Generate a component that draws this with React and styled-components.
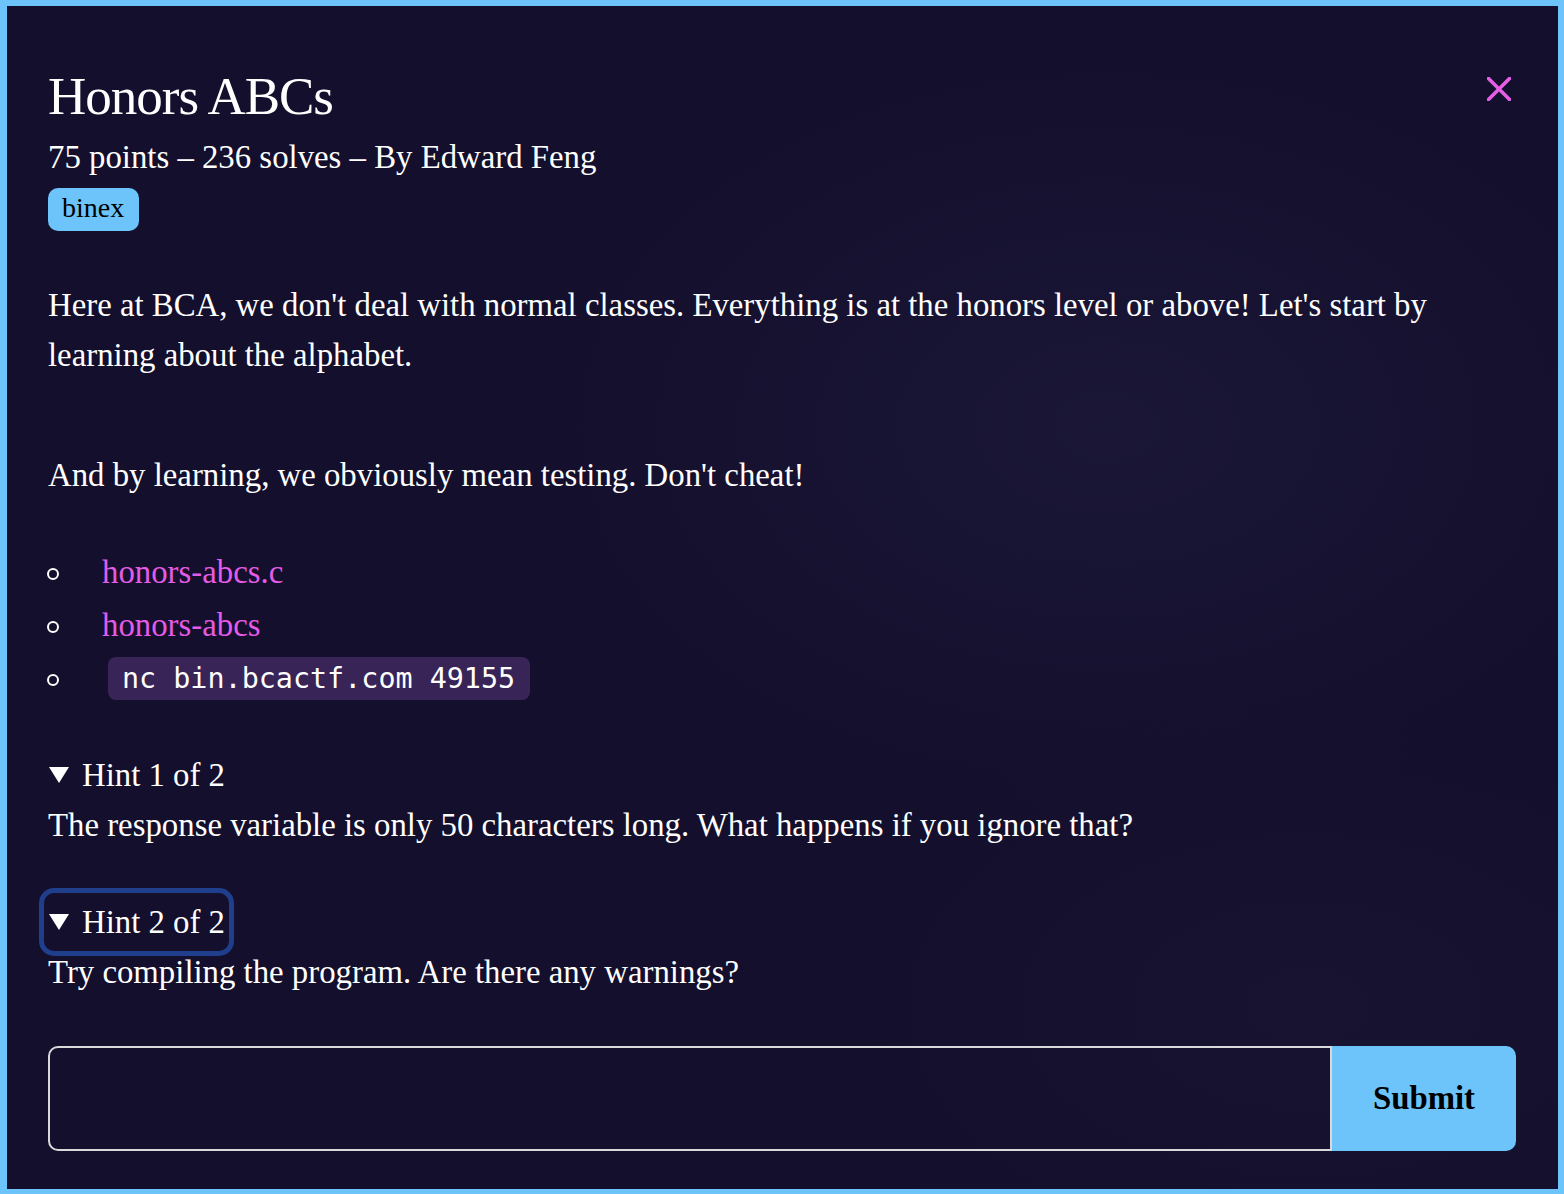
import styled, { createGlobalStyle } from "styled-components";

const GlobalStyle = createGlobalStyle`
  html, body {
    margin: 0;
    padding: 0;
    background: #130f2c;
  }
  * {
    box-sizing: border-box;
  }
`;

const Modal = styled.div`
  height: 100vh;
  overflow: hidden;
  border-style: solid;
  border-color: #6cc4fa;
  border-width: 6px 6px 5px 7px;
  padding: 60px 42px 0 41px;
  background:
    radial-gradient(ellipse 600px 400px at 1100px 420px, rgba(40, 34, 72, 0.35), transparent),
    radial-gradient(ellipse 500px 300px at 1300px 1000px, rgba(34, 28, 60, 0.3), transparent),
    #130f2c;
  color: #ffffff;
  font-family: "Liberation Serif", "Times New Roman", serif;
  font-size: 32.8px;
`;

const Header = styled.div`
  display: flex;
  justify-content: space-between;
  align-items: flex-start;
`;

const HeaderText = styled.div`
  display: flex;
  flex-direction: column;
  align-items: flex-start;
`;

const Title = styled.h1`
  margin: 0;
  font-size: 53px;
  font-weight: 400;
  line-height: 60px;
  letter-spacing: -1px;
`;

const CloseButton = styled.button`
  margin: 11px 5px 0 0;
  padding: 0;
  width: 24px;
  height: 24px;
  border: none;
  background: none;
  color: #e65ee6;
  cursor: pointer;
  display: flex;
`;

const Meta = styled.div`
  margin-top: 11px;
  line-height: 40px;
`;

const Tag = styled.span`
  display: inline-block;
  margin-top: 11px;
  padding: 0 15px 4px 14px;
  font-size: 28px;
  line-height: 39px;
  border-radius: 10px;
  background: #6cc4fa;
  color: #000;
`;

const Para = styled.p`
  margin: ${(p) => p.$top}px 0 0;
  line-height: 50px;
`;

const List = styled.ul`
  list-style: none;
  margin: 46px 0 0 -1px;
  padding: 0;
`;

const Item = styled.li`
  display: flex;
  align-items: center;
  height: 53px;
`;

const Bullet = styled.span`
  width: 12px;
  height: 12px;
  border: 2px solid #fff;
  border-radius: 50%;
  margin-right: 43px;
  margin-top: 2px;
  flex: none;
`;

const Link = styled.a`
  color: #e35be6;
  text-decoration: none;
`;

const Code = styled.code`
  display: inline-block;
  margin-left: 6px;
  padding: 0 15px 0 14px;
  line-height: 43px;
  border-radius: 8px;
  background: #382457;
  font-family: "DejaVu Sans Mono", "Liberation Mono", monospace;
  font-size: 28.4px;
  color: #fff;
`;

const Hint = styled.details`
  margin-top: ${(p) => p.$top}px;
`;

const Summary = styled.summary`
  display: inline-flex;
  align-items: center;
  list-style: none;
  line-height: 50px;
  cursor: pointer;
  border-radius: 6px;
  outline: ${(p) => (p.$focused ? "5px solid #1f3e8c" : "none")};
  outline-offset: 4px;
  &::-webkit-details-marker {
    display: none;
  }
  svg {
    margin: 0 13px 0 1px;
  }
`;

const HintText = styled.div`
  line-height: 50px;
`;

const Form = styled.form`
  display: flex;
  margin-top: 49px;
  height: 105px;
`;

const Input = styled.input`
  flex: 1;
  min-width: 0;
  border: 2px solid #d9d9d9;
  border-radius: 10px 0 0 10px;
  background: transparent;
  color: #fff;
  font-family: inherit;
  font-size: 32px;
  padding: 0 20px;
  outline: none;
`;

const Submit = styled.button`
  width: 184px;
  border: none;
  border-radius: 0 10px 10px 0;
  background: #6cc4fa;
  color: #000;
  font-family: "Liberation Serif", "Times New Roman", serif;
  font-size: 32.8px;
  font-weight: 700;
  cursor: pointer;
`;

const Triangle = () => (
  <svg width="20" height="16" viewBox="0 0 20 16">
    <path d="M0 0h20L10 16z" fill="#fff" />
  </svg>
);

const hints = [
  {
    title: "Hint 1 of 2",
    text: "The response variable is only 50 characters long. What happens if you ignore that?",
    top: 45,
  },
  {
    title: "Hint 2 of 2",
    text: "Try compiling the program. Are there any warnings?",
    top: 47,
    focused: true,
  },
];

const App = () => {
  return (
    <>
      <GlobalStyle />
      <Modal>
        <Header>
          <HeaderText>
            <Title>Honors ABCs</Title>
            <Meta>75 points – 236 solves – By Edward Feng</Meta>
            <Tag>binex</Tag>
          </HeaderText>
          <CloseButton aria-label="Close">
            <svg width="24" height="24" viewBox="0 0 24 24">
              <path
                d="M1.5 1.5l21 21M22.5 1.5l-21 21"
                stroke="currentColor"
                strokeWidth="3.6"
                strokeLinecap="square"
              />
            </svg>
          </CloseButton>
        </Header>

        <Para $top={49}>
          Here at BCA, we don't deal with normal classes. Everything is at the
          honors level or above! Let's start by learning about the alphabet.
        </Para>
        <Para $top={70}>
          And by learning, we obviously mean testing. Don't cheat!
        </Para>

        <List>
          <Item>
            <Bullet />
            <Link href="#">honors-abcs.c</Link>
          </Item>
          <Item>
            <Bullet />
            <Link href="#">honors-abcs</Link>
          </Item>
          <Item>
            <Bullet />
            <Code>nc bin.bcactf.com 49155</Code>
          </Item>
        </List>

        {hints.map((h) => (
          <Hint key={h.title} open $top={h.top}>
            <Summary $focused={h.focused}>
              <Triangle />
              {h.title}
            </Summary>
            <HintText>{h.text}</HintText>
          </Hint>
        ))}

        <Form onSubmit={(e) => e.preventDefault()}>
          <Input type="text" />
          <Submit type="submit">Submit</Submit>
        </Form>
      </Modal>
    </>
  );
};

export default App;
